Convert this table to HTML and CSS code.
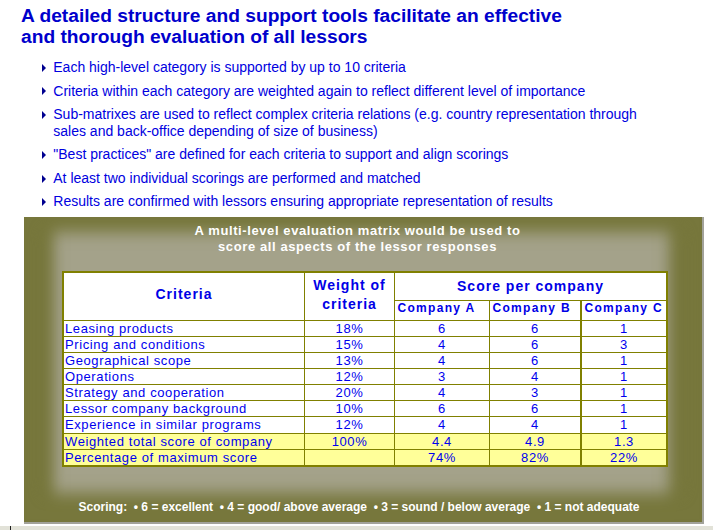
FILE: index.html
```html
<!DOCTYPE html>
<html lang="en">
<head>
<meta charset="utf-8">
<title>Evaluation of lessors</title>
<link rel="stylesheet" href="styles.css">
</head>
<body>
<h1 class="title">A detailed structure and support tools facilitate an effective<br>and thorough evaluation of all lessors</h1>
<ul class="points">
  <li>Each high-level category is supported by up to 10 criteria</li>
  <li>Criteria within each category are weighted again to reflect different level of importance</li>
  <li>Sub-matrixes are used to reflect complex criteria relations (e.g. country representation through sales and back-office depending of size of business)</li>
  <li>"Best practices" are defined for each criteria to support and align scorings</li>
  <li>At least two individual scorings are performed and matched</li>
  <li>Results are confirmed with lessors ensuring appropriate representation of results</li>
</ul>
<section class="panel">
  <h2 class="panel-title">A multi-level evaluation matrix would be used to<br>score all aspects of the lessor responses</h2>
  <div class="matrix">
    <div class="cell c1 top head span-r">Criteria</div>
    <div class="cell top head span-r two">Weight of<br>criteria</div>
    <div class="cell top head span-c thick">Score per company</div>
    <div class="cell comp">Company A</div>
    <div class="cell comp thick">Company B</div>
    <div class="cell comp thick">Company C</div>

    <div class="cell c1">Leasing products</div><div class="cell">18%</div><div class="cell">6</div><div class="cell thick">6</div><div class="cell thick">1</div>
    <div class="cell c1">Pricing and conditions</div><div class="cell">15%</div><div class="cell">4</div><div class="cell thick">6</div><div class="cell thick">3</div>
    <div class="cell c1">Geographical scope</div><div class="cell">13%</div><div class="cell">4</div><div class="cell thick">6</div><div class="cell thick">1</div>
    <div class="cell c1">Operations</div><div class="cell">12%</div><div class="cell">3</div><div class="cell thick">4</div><div class="cell thick">1</div>
    <div class="cell c1">Strategy and cooperation</div><div class="cell">20%</div><div class="cell">4</div><div class="cell thick">3</div><div class="cell thick">1</div>
    <div class="cell c1">Lessor company background</div><div class="cell">10%</div><div class="cell">6</div><div class="cell thick">6</div><div class="cell thick">1</div>
    <div class="cell c1">Experience in similar programs</div><div class="cell">12%</div><div class="cell">4</div><div class="cell thick">4</div><div class="cell thick">1</div>
    <div class="cell c1 yel">Weighted total score of company</div><div class="cell yel">100%</div><div class="cell yel">4.4</div><div class="cell yel thick">4.9</div><div class="cell yel thick">1.3</div>
    <div class="cell c1 yel last">Percentage of maximum score</div><div class="cell yel last"></div><div class="cell yel last">74%</div><div class="cell yel last thick">82%</div><div class="cell yel last thick">22%</div>
  </div>
  <p class="scoring">Scoring:&nbsp; • 6 = excellent&nbsp; • 4 = good/ above average&nbsp; • 3 = sound / below average&nbsp; • 1 = not adequate</p>
</section>
<div class="strip"></div>
</body>
</html>
```

FILE: styles.css
```css
html, body {
  margin: 0;
  padding: 0;
  background: #ffffff;
}
body {
  width: 713px;
  height: 530px;
  overflow: hidden;
  font-family: "Liberation Sans", Arial, sans-serif;
}
.title {
  margin: 0;
  padding: 6px 0 0 21px;
  font-size: 19.2px;
  line-height: 20.6px;
  font-weight: bold;
  color: #0000cc;
}
.points {
  list-style: none;
  margin: 12px 0 0 0;
  padding: 0 48px 0 41.7px;
}
.points li {
  display: flex;
  font-size: 14px;
  line-height: 17px;
  color: #0000e0;
  margin-bottom: 6.4px;
}
.points li::before {
  content: "";
  flex-shrink: 0;
  width: 0;
  height: 0;
  margin-top: 4.8px;
  margin-right: 7.6px;
  border-left: 4px solid #000090;
  border-top: 4px solid transparent;
  border-bottom: 4px solid transparent;
}
.points li:last-child {
  margin-bottom: 0;
}
.panel {
  box-sizing: border-box;
  width: 680px;
  margin: 6.8px 0 0 24px;
  padding: 6.3px 0 7.7px 0;
  background: #a4a28a;
  border-right: 2px solid #a2a29a;
  border-bottom: 2px solid #a2a29a;
  box-shadow:
    inset 0 -7px 16px 22px #77773c,
    inset 32px 0 16px -4px #77773c,
    inset -36px 0 16px -4px #77773c;
}
.panel-title {
  margin: 0;
  padding-right: 11px;
  text-align: center;
  font-size: 13px;
  line-height: 15.5px;
  font-weight: bold;
  letter-spacing: 0.6px;
  color: #ffffff;
}
.matrix {
  display: grid;
  grid-template-columns: 243px 90px 95px 92px 86px;
  grid-template-rows: 30px 20px repeat(6, 16px) 17px 16px 17px;
  margin: 16.7px 0 0 38px;
  width: 606px;
}
.cell {
  box-sizing: border-box;
  display: flex;
  align-items: center;
  justify-content: center;
  background: #ffffff;
  border-right: 1px solid #808000;
  border-bottom: 1px solid #808000;
  font-size: 13px;
  letter-spacing: 0.6px;
  color: #0000ee;
  white-space: nowrap;
}
.c1 {
  justify-content: flex-start;
  padding-left: 1px;
  border-left: 2px solid #808000;
}
.top {
  border-top: 2px solid #808000;
}
.thick {
  border-right-width: 2px;
}
.last {
  border-bottom-width: 2px;
}
.yel {
  background: #ffff99;
}
.head {
  font-size: 14px;
  font-weight: bold;
  letter-spacing: 1px;
  color: #0000e6;
  justify-content: center;
  padding-left: 0;
}
.span-r {
  grid-row: span 2;
  padding-bottom: 4px;
}
.span-c {
  grid-column: span 3;
}
.two {
  line-height: 19px;
  text-align: center;
  padding-bottom: 3px;
}
.comp {
  justify-content: flex-start;
  padding: 0 0 4px 2.5px;
  font-size: 12px;
  font-weight: bold;
  letter-spacing: 1.3px;
  color: #0000e6;
}
.scoring {
  margin: 33.3px 0 0 0;
  padding-right: 8px;
  text-align: center;
  font-size: 12px;
  line-height: 14px;
  font-weight: bold;
  color: #ffffff;
  white-space: nowrap;
}
.strip {
  margin-top: 2px;
  height: 10px;
  background: #e2e2d8;
}
.strip::before {
  content: "";
  display: block;
  margin-left: 10px;
  width: 1px;
  height: 10px;
  background: #202020;
}
```
